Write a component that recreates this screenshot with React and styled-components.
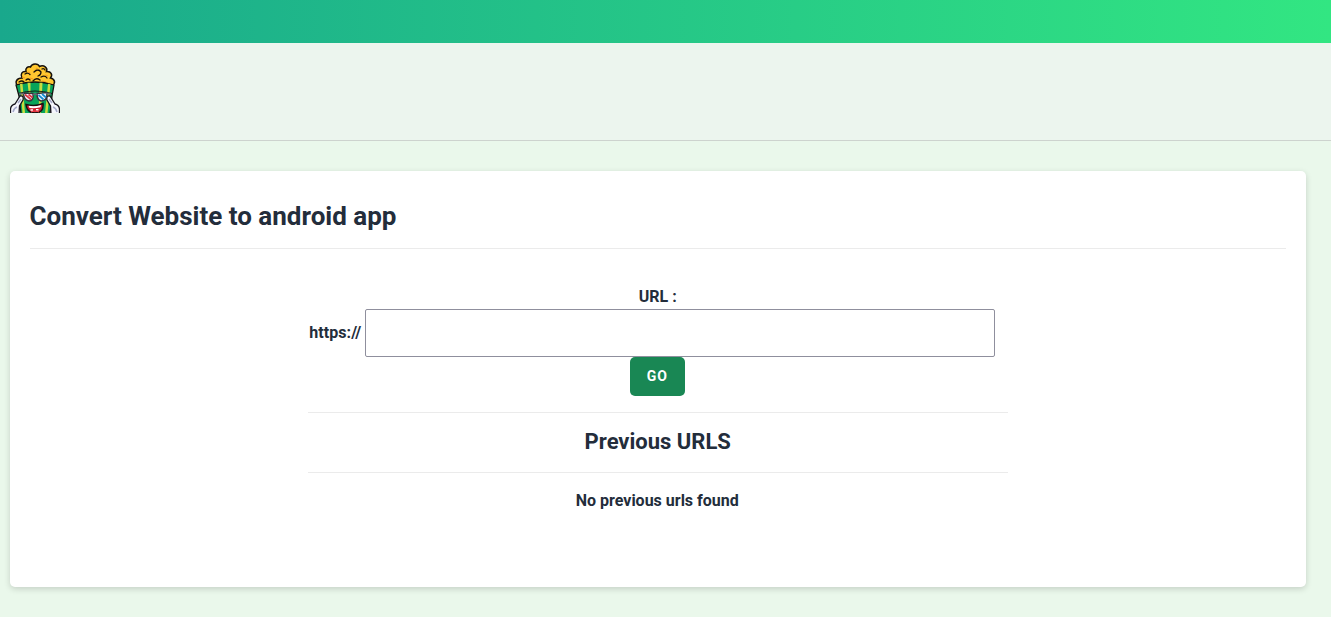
import React from "react";
import styled, { createGlobalStyle } from "styled-components";

const GlobalStyle = createGlobalStyle`
  *, *::before, *::after { box-sizing: border-box; }
  body {
    margin: 0;
    background: #fff;
    color: #232d3b;
    font-family: Roboto, "Liberation Sans", sans-serif;
    font-size: 16px;
    font-weight: 700;
    line-height: 24px;
  }
`;

const Page = styled.div`
  height: 617px;
  background: #eaf8eb;
  overflow: hidden;
`;

const TopBar = styled.div`
  height: 43px;
  background: linear-gradient(90deg, #19a88c, #32e682);
`;

const Header = styled.header`
  height: 98px;
  padding: 20px 10px;
  background: #ecf5ee;
  border-bottom: 1px solid #cdd3ce;
`;

const LogoSvg = styled.svg`
  display: block;
  width: 50px;
  height: 50px;
`;

const Card = styled.main`
  width: 1296px;
  height: 416px;
  margin: 30px 0 0 10px;
  padding: 25px 20px 24px 19.5px;
  background: #fff;
  border-radius: 5px;
  box-shadow: 0 2px 6px rgba(0, 0, 0, 0.16);
`;

const Title = styled.h1`
  margin: 0 0 36px;
  padding-bottom: 11px;
  border-bottom: 1px solid #ebebeb;
  font-size: 26px;
  line-height: 41px;
`;

const Form = styled.form`
  display: flex;
  flex-direction: column;
  align-items: center;
  width: 699px;
  margin: 0 auto;
`;

const Label = styled.label`
  padding-bottom: 1px;
  line-height: 23px;
`;

const UrlRow = styled.div`
  display: flex;
  align-items: center;
  justify-content: flex-end;
  align-self: stretch;
  gap: 4px;
  padding-right: 12px;
`;

const Scheme = styled.span`
  letter-spacing: 0.06px;
`;

const UrlInput = styled.input`
  width: 630px;
  height: 48px;
  padding: 8px;
  background: #fff;
  border: 1px solid #8f8f9d;
  border-radius: 2px;
  font: inherit;
`;

const GoButton = styled.button`
  width: 55px;
  height: 39px;
  margin-right: 1px;
  padding: 0 0 1px;
  background: #198754;
  border: 0;
  border-radius: 5px;
  color: #fff;
  font: inherit;
  font-size: 14px;
  line-height: 22px;
  letter-spacing: 1px;
`;

const History = styled.section`
  width: 700px;
  margin: 16px auto 0;
  text-align: center;
`;

const HistoryTitle = styled.h2`
  margin: 0 0 16px;
  border: solid #ebebeb;
  border-width: 1px 0;
  font-size: 22px;
  line-height: 57px;
  height: 61px;
`;

const Empty = styled.p`
  margin: 0;
  padding-right: 1px;
`;

function Logo() {
  return (
    <LogoSvg viewBox="0 0 50 50" aria-label="Popcorn logo">
      <path d="M8 23C4 19 7 15 12 15C10 11 12 8 16 8.5C15 5 18 3 20.5 4C22 0 28 0 29.5 3.5C34 1.5 38 5 36.5 8.5C41 8 43 12 40.5 15C45 16 46 20 42 23Z" fill="#ffc72f" stroke="#17120c" strokeWidth="1.5" />
      <path d="M9 19q3-2 5 0M15 11q3-2 5 .5M24 9q4-4 7 0q0 3-3 4M32 6q2-1 3 1M31 14q4-2 6 1M23 18q3-4 7-1M16 17q2-2 4 0" fill="none" stroke="#17120c" strokeWidth="1.3" strokeLinecap="round" />
      <path d="M12 14l3 1M18 9l2 1M26 5l2 1M35 12l3 1M20 15l3 1M32 18l4 1" stroke="#f59a20" strokeWidth="1.2" />
      <path d="M6 22Q25 16 44 22L42 33L40 51H11L9 33Z" fill="#08a45a" stroke="#15130f" strokeWidth="1.3" />
      <path d="M10 21l2.5-.5L15 50h-2.5zM17.5 19.8h3V32H19zM29.5 19.8h3L31 50h-2.5zM38 20.8l2.5.5L37.5 50h-2.5z" fill="#c9dc3e" />
      <path d="M8 30.5Q25 25.5 42 30.5" fill="none" stroke="#15130f" strokeWidth=".9" />
      <path d="M.5 51V46Q1 42 5 41L10 33Q14 32 13 37L9.5 43L9 51M49.5 51V46Q49 42 45 41L40 33Q36 32 37 37L40.5 43L41 51" fill="#f5f6fc" stroke="#15131a" strokeWidth="1.3" />
      <path d="M3 49q1-4 4-5M47 49q-1-4-4-5M8 40l3-4M42 40l-3-4" fill="none" stroke="#a8acca" strokeWidth="1.5" />
      <path d="M13.5 30L23 30.5Q24 38 19 38Q13.5 37 13.5 30ZM27 30.5L37 29.5Q37.5 38 31 38Q27 37 27 30.5Z" fill="#edf4fc" stroke="#36333d" strokeWidth="1.5" />
      <path d="M15 31.5l6 5M18.5 31.5l4 3" stroke="#df3442" strokeWidth="1.7" />
      <path d="M28.5 32l5 4.5M32 31l4 3.5" stroke="#168bd0" strokeWidth="1.7" />
      <path d="M22.5 32q2.5-2 5 0M9 31l5-.5M36 30.5l5 .5" fill="none" stroke="#626270" strokeWidth="1.6" />
      <path d="M16 41.5Q25 44 33 40.5Q34 50 25 50Q17 50 16 41.5Z" fill="#cf1f2d" stroke="#18100f" strokeWidth="1.5" />
      <path d="M18.5 42.8Q25 44 31 42L30.5 44.2Q25 45.5 19.5 45ZM20.5 46.3h2.5v1.5h-2.5zM26 46h2.5v1.5H26z" fill="#fff" />
      <path d="M21 49q4-2 8 0" fill="none" stroke="#f04450" strokeWidth="1.2" />
    </LogoSvg>
  );
}

export default function App() {
  return (
    <>
      <GlobalStyle />
      <Page>
        <TopBar />
        <Header>
          <Logo />
        </Header>
        <Card>
          <Title>Convert Website to android app</Title>
          <Form onSubmit={(event) => event.preventDefault()}>
            <Label htmlFor="url">URL :</Label>
            <UrlRow>
              <Scheme>https://</Scheme>
              <UrlInput id="url" type="text" />
            </UrlRow>
            <GoButton type="submit">GO</GoButton>
          </Form>
          <History>
            <HistoryTitle>Previous URLS</HistoryTitle>
            <Empty>No previous urls found</Empty>
          </History>
        </Card>
      </Page>
    </>
  );
}
